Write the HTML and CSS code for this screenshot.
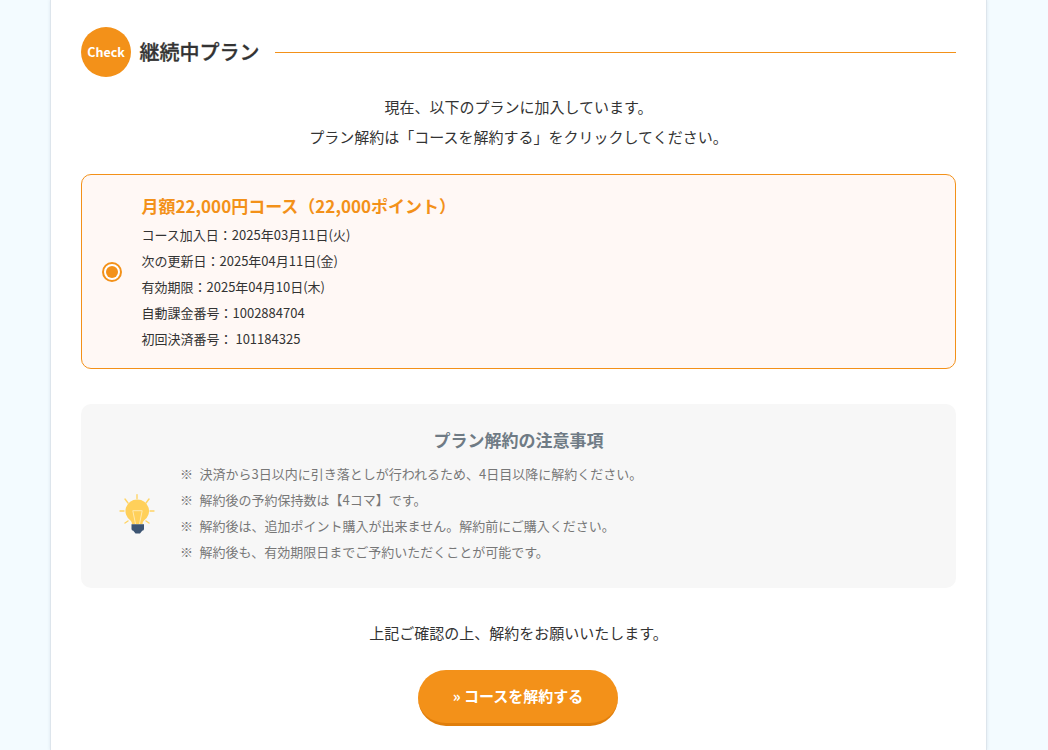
FILE: index.html
```html
<!DOCTYPE html>
<html lang="ja">
<head>
<meta charset="utf-8">
<title>継続中プラン</title>
<link rel="stylesheet" href="styles.css">
</head>
<body>
<main class="panel">
  <div class="heading">
    <span class="badge">Check</span>
    <h2 class="heading-title">継続中プラン</h2>
    <span class="heading-rule"></span>
  </div>
  <div class="intro">
    <p>現在、以下のプランに加入しています。</p>
    <p>プラン解約は「コースを解約する」をクリックしてください。</p>
  </div>
  <section class="plan">
    <span class="radio"><span class="radio-dot"></span></span>
    <div class="plan-body">
      <h3 class="plan-title">月額22,000円コース（22,000ポイント）</h3>
      <p>コース加入日：2025年03月11日(火)</p>
      <p>次の更新日：2025年04月11日(金)</p>
      <p>有効期限：2025年04月10日(木)</p>
      <p>自動課金番号：1002884704</p>
      <p>初回決済番号： 101184325</p>
    </div>
  </section>
  <section class="notice">
    <svg class="bulb" viewBox="0 0 36 40" width="36" height="40" aria-hidden="true">
      <g stroke="#ffd466" stroke-width="1.4" stroke-linecap="round">
        <path d="M18 .7v3.800"/>
        <path d="M6 5l3 4"/>
        <path d="M30 5l-3 4"/>
        <path d="M1 17h4"/>
        <path d="M31 17h4"/>
        <path d="M6 29l3-2"/>
        <path d="M30 29l-3-2"/>
      </g>
      <path d="M18 5.500a11.500 11.500 0 0 0-6.500 21q1.500 1.200 1.500 3.800h10.500q0-2.600 1.500-3.800a11.500 11.500 0 0 0-6.500-21z" fill="#ffd05a"/>
      <path d="M16.500 30l-2.700-13.300h9.400L20.500 30" fill="none" stroke="#ffe9ae" stroke-width="1"/>
      <path d="M12.500 30.300h12.500v4.700q0 1.400-1.800 1.800l-2.200 2.700h-4.500l-2.200-2.700q-1.800-.4-1.800-1.800z" fill="#3d5573"/>
    </svg>
    <div class="notice-body">
      <h3 class="notice-title">プラン解約の注意事項</h3>
      <ul class="notice-list">
        <li><span class="mark">※</span>決済から3日以内に引き落としが行われるため、4日目以降に解約ください。</li>
        <li><span class="mark">※</span>解約後の予約保持数は【4コマ】です。</li>
        <li><span class="mark">※</span>解約後は、追加ポイント購入が出来ません。解約前にご購入ください。</li>
        <li><span class="mark">※</span>解約後も、有効期限日までご予約いただくことが可能です。</li>
      </ul>
    </div>
  </section>
  <p class="confirm">上記ご確認の上、解約をお願いいたします。</p>
  <div class="actions"><a class="cancel-btn" href="#">» コースを解約する</a></div>
</main>
</body>
</html>
```
FILE: styles.css
```css
* { box-sizing: border-box; }
html, body { height: 750px; overflow: hidden; }
body {
  margin: 0;
  background: #f3fbff;
  color: #333;
  font-family: "Noto Sans CJK JP", "Noto Sans", sans-serif;
  font-size: 14px;
}
p, h2, h3, ul { margin: 0; padding: 0; }
.panel {
  width: 937px;
  height: 750px;
  margin-left: 50px;
  padding: 27px 30px 0;
  background: #fff;
  border-left: 1px solid #dde5ec;
  border-right: 1px solid #dde5ec;
  box-shadow: 0 0 3px rgba(150, 170, 190, 0.25);
}
.heading { display: flex; align-items: center; height: 50px; }
.badge {
  width: 50px;
  height: 50px;
  padding-bottom: 2px;
  border-radius: 50%;
  background: #f39119;
  color: #fff;
  font-size: 12.5px;
  font-weight: 700;
  display: flex;
  align-items: center;
  justify-content: center;
  flex: none;
}
.heading-title { margin-left: 8.500px; font-size: 20px; font-weight: 500; -webkit-text-stroke: 0.3px #333; line-height: 50px; color: #333; }
.heading-rule { flex: 1; margin-left: 15.500px; height: 1px; background: #f39119; }
.intro { margin-top: 15px; text-align: center; font-size: 15px; line-height: 30px; }
.plan {
  margin-top: 22px;
  height: 195px;
  display: flex;
  align-items: center;
  padding-left: 20px;
  background: #fff8f5;
  border: 1px solid #f39119;
  border-radius: 10px;
}
.radio {
  width: 20px;
  height: 20px;
  border: 2px solid #f39119;
  border-radius: 50%;
  background: #fff;
  display: flex;
  align-items: center;
  justify-content: center;
  flex: none;
}
.radio-dot { width: 12px; height: 12px; border-radius: 50%; background: #f39119; }
.plan-body { margin-left: 19.500px; font-size: 13px; line-height: 26px; }
.plan-title { font-size: 17px; font-weight: 700; color: #f39119; line-height: 28px; margin-bottom: 2px; }
.notice {
  margin-top: 35px;
  height: 184px;
  display: flex;
  align-items: center;
  padding-left: 38px;
  background: #f7f7f7;
  border-radius: 10px;
}
.bulb { flex: none; margin-top: 36px; }
.notice-body { flex: 1; margin-left: 25px; color: #6f7b85; }
.notice-title { font-size: 17px; font-weight: 700; text-align: center; margin-right: 99px; line-height: 28px; margin-bottom: 7px; color: #6f7b85; }
.notice-list { list-style: none; font-size: 13px; line-height: 26px; color: #777; padding-bottom: 2px; }
.mark { margin-right: 6.500px; }
.confirm { margin-top: 30px; text-align: center; font-size: 15px; line-height: 30px; }
.actions { margin-top: 22px; display: flex; justify-content: center; }
.cancel-btn {
  width: 200px;
  height: 56px;
  margin-right: 1px;
  padding-bottom: 3px;
  border-radius: 28px;
  background: #f39119;
  border-bottom: 3px solid #e07e0b;
  color: #fff;
  font-size: 15px;
  font-weight: 700;
  text-decoration: none;
  display: flex;
  align-items: center;
  justify-content: center;
}
```
